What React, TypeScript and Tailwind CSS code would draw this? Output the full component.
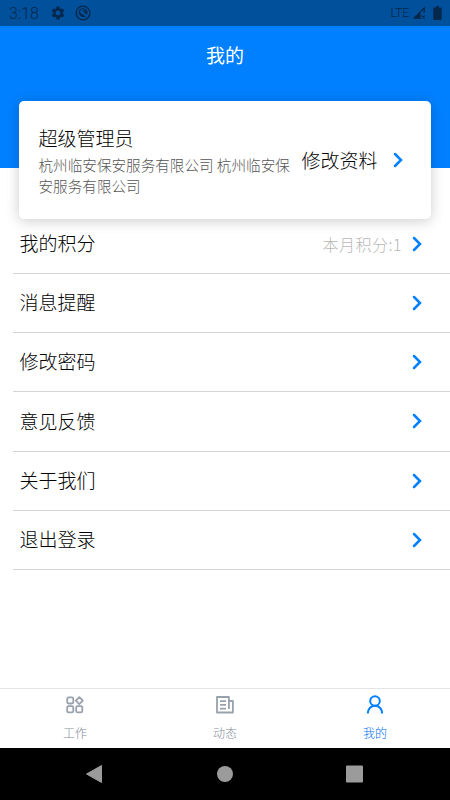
type IconProps = { className?: string };

const MENU = [
  { label: "我的积分", extra: "本月积分:1" },
  { label: "消息提醒" },
  { label: "修改密码" },
  { label: "意见反馈" },
  { label: "关于我们" },
  { label: "退出登录" },
];

function Chevron({ className }: IconProps) {
  return (
    <svg viewBox="0 0 10 16" fill="none" className={className}>
      <path
        d="M2 2 8 8 2 14"
        stroke="#0080ff"
        strokeWidth="2.5"
        strokeLinecap="round"
        strokeLinejoin="miter"
      />
    </svg>
  );
}

function WorkIcon() {
  return (
    <svg viewBox="0 0 18 18" fill="none" stroke="#98a2ac" strokeWidth="1.8" className="size-[18px]">
      <rect x="1.2" y="1.4" width="6.1" height="6.1" rx="1.4" />
      <rect x="1.2" y="10.2" width="6.1" height="6.1" rx="1.4" />
      <rect x="10.2" y="10.2" width="6.1" height="6.1" rx="1.4" />
      <path d="M13.3 1.1 16.8 4.6 13.3 8.1 9.8 4.6Z" strokeLinejoin="round" />
    </svg>
  );
}

function NewsIcon() {
  return (
    <svg viewBox="0 0 18 18" fill="none" stroke="#98a2ac" strokeWidth="1.8" className="size-[18px]">
      <path d="M12.9 13V1H1V16.5H16.9V5H12.9" strokeLinejoin="round" />
      <path d="M4 5.1h6M4 8.9h6M4 12.6h6" strokeWidth="1.6" />
    </svg>
  );
}

function MineIcon() {
  return (
    <svg viewBox="0 0 18 18" fill="none" stroke="#0080ff" strokeWidth="2" className="size-[18px] overflow-visible">
      <circle cx="9" cy="5" r="4.8" />
      <path d="M1.8 17.6C1.8 13 4.8 9.8 9 9.8s7.2 3.2 7.2 7.8" />
    </svg>
  );
}

const TABS = [
  { label: "工作", icon: <WorkIcon />, color: "text-[#848e98]" },
  { label: "动态", icon: <NewsIcon />, color: "text-[#848e98]" },
  { label: "我的", icon: <MineIcon />, color: "text-[#0070f5]" },
];

function StatusBar() {
  return (
    <div className="flex h-[26px] items-center bg-[#00509c] pr-[8px] pl-[9px] font-['Roboto'] text-[#06284c]">
      <span className="w-[41px] pt-[2px] text-[16px] leading-none">3:18</span>
      <svg viewBox="0 0 24 24" fill="currentColor" className="size-4">
        <path d="M19.14 12.94c.04-.3.06-.61.06-.94 0-.32-.02-.64-.07-.94l2.03-1.58a.49.49 0 0 0 .12-.61l-1.92-3.32a.488.488 0 0 0-.59-.22l-2.39.96c-.5-.38-1.03-.7-1.62-.94l-.36-2.54a.484.484 0 0 0-.48-.41h-3.84c-.24 0-.43.17-.47.41l-.36 2.54c-.59.24-1.13.57-1.62.94l-2.39-.96c-.22-.08-.47 0-.59.22L2.74 8.87c-.12.21-.08.47.12.61l2.03 1.58c-.05.3-.09.63-.09.94s.02.64.07.94l-2.03 1.58a.49.49 0 0 0-.12.61l1.92 3.32c.12.22.37.29.59.22l2.39-.96c.5.38 1.03.7 1.62.94l.36 2.54c.05.24.24.41.48.41h3.84c.24 0 .44-.17.47-.41l.36-2.54c.59-.24 1.13-.56 1.62-.94l2.39.96c.22.08.47 0 .59-.22l1.92-3.32c.12-.22.07-.47-.12-.61l-2.01-1.58zM12 15.6A3.6 3.6 0 1 1 12 8.4a3.6 3.6 0 0 1 0 7.2z" />
      </svg>
      <svg viewBox="0 0 16 16" fill="none" stroke="currentColor" className="ml-[9px] size-4">
        <circle cx="8" cy="8" r="6.9" strokeWidth="1.4" />
        <path d="M4.2 9A4 4 0 1 1 11.8 9" strokeWidth="1.2" />
        <path d="M4.6 7.2 10.8 11.6A4.6 4.6 0 0 1 4.2 9ZM7.4 5.4C9.6 4.6 12.2 6.8 11.2 9.4Z" fill="currentColor" stroke="none" />
      </svg>
      <span className="ml-auto text-[12.5px] leading-none tracking-[-0.3px]">LTE</span>
      <svg viewBox="0 0 14 14" className="ml-[3px] size-[14px]" fill="none" stroke="currentColor">
        <path d="M1.8 12.4 12.2 2V7M1.8 12.4H8" strokeWidth="1.2" />
        <path d="M8.6 5.6V13H1.5Z" fill="currentColor" stroke="none" />
        <path d="m9.7 9.6 3 3m0-3-3 3" strokeWidth="1.1" />
      </svg>
      <svg viewBox="0 0 9 14" className="ml-[7px] h-[14px] w-[9px]" fill="currentColor">
        <path d="M3 0h3v1.5h2q.7 0 .7.7v11q0 .8-.7.8H1q-.7 0-.7-.8v-11q0-.7.7-.7h2z" />
      </svg>
    </div>
  );
}

function ProfileCard() {
  return (
    <section className="relative mx-[19px] -mt-[67px] flex h-[118px] items-center rounded-[5px] bg-white pr-[28px] pl-[19.5px] shadow-[0_2px_14px_rgba(0,0,0,0.2)]">
      <div className="w-[256px] shrink-0">
        <h2 className="-mt-px text-[19px] leading-[28px]">超级管理员</h2>
        <p className="mt-[2px] text-[14.6px] leading-[21px] text-[#555]">
          杭州临安保安服务有限公司 杭州临安保安服务有限公司
        </p>
      </div>
      <span className="ml-[7px] shrink-0 pt-px text-[19px]">修改资料</span>
      <Chevron className="ml-auto h-4 w-[10px] shrink-0" />
    </section>
  );
}

export default function App() {
  return (
    <div className="flex h-[800px] w-[450px] flex-col overflow-hidden bg-white font-['Noto_Sans_CJK_SC',sans-serif] font-light text-black">
      <StatusBar />
      <header className="h-[142px] shrink-0 bg-[#0080ff] pt-[15px] text-center text-[19px] leading-[28px] font-normal text-white">
        我的
      </header>
      <ProfileCard />

      <ul className="-mt-[4.2px] ml-[13px]">
        {MENU.map((item) => (
          <li
            key={item.label}
            className="flex h-[59.2px] items-center border-b border-[#d4d4d4] pr-[28px] pl-[6.5px] text-[19px]"
          >
            <span className="pb-[1.4px]">{item.label}</span>
            {item.extra && (
              <span className="ml-auto pr-[10px] text-[16px] leading-6 tracking-[0.5px] text-[#b8b8b8]">
                {item.extra}
              </span>
            )}
            <Chevron className={item.extra ? "h-4 w-[10px]" : "ml-auto h-4 w-[10px]"} />
          </li>
        ))}
      </ul>

      <nav className="mt-auto grid h-[60px] shrink-0 grid-cols-3 border-t border-[#e4e4e4]">
        {TABS.map((tab) => (
          <div key={tab.label} className={`flex flex-col items-center pt-[7px] ${tab.color}`}>
            {tab.icon}
            <span className="mt-[10px] text-[12px] leading-[18px]">{tab.label}</span>
          </div>
        ))}
      </nav>

      <footer className="h-[52px] shrink-0 bg-black">
        <svg viewBox="0 0 450 52" className="h-[52px] w-full" fill="#9b9b9b">
          <path d="M101.5 17.5V34.5L86.5 26Z" stroke="#9b9b9b" strokeLinejoin="round" />
          <circle cx="225" cy="26" r="8" />
          <rect x="346" y="17.5" width="17" height="17" rx="1" />
        </svg>
      </footer>
    </div>
  );
}
